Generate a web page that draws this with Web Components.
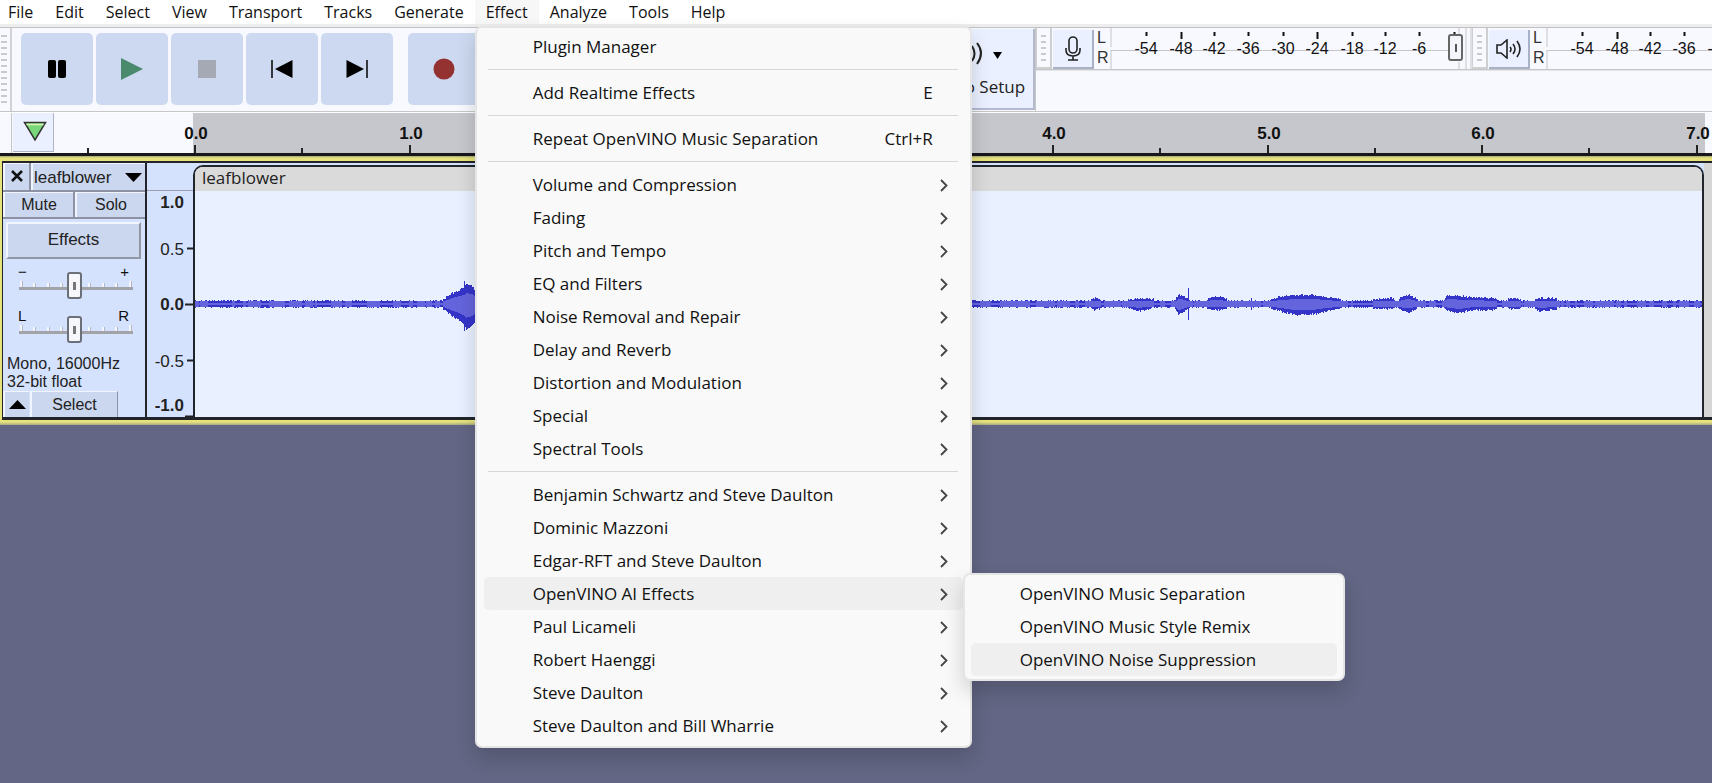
<!DOCTYPE html>
<html lang="en">
<head>
<meta charset="utf-8">
<title>Audio editor</title>
<style>
  :root {
    --ui: "Open Sans", "Noto Sans", sans-serif;
    --arial: "Liberation Sans", Arial, sans-serif;
    --face: #cdd9f0;
    --panel: #d5e2fe;
    --bar: #f8f9ff;
    --line: #c6c6c6;
    --ink: #111;
  }
  html, body { margin: 0; min-height: 100vh; background: #636684; overflow: hidden; }
</style>
</head>
<body>
<audio-app></audio-app>

<script>
const define = (name, html, ready) => {
  const tpl = document.createElement('template');
  tpl.innerHTML = html;
  customElements.define(name, class extends HTMLElement {
    constructor() {
      super();
      this.attachShadow({ mode: 'open' }).append(tpl.content.cloneNode(true));
    }
    connectedCallback() { if (ready) ready(this, this.shadowRoot); }
  });
};

/* ---- menus ---- */
define('menu-title', `
<style>
  :host { display: block; position: relative; flex: none; }
  button { font: 16px/24px var(--ui); height: 24px; padding: 0 11px; border: 0; background: none; color: var(--ink); display: block; white-space: nowrap; }
  :host([open]) button { background: #f7f7f7; }
  ::slotted(menu-popup) { position: absolute; left: 0; top: 26px; z-index: 10; }
</style>
<button type="button"></button><slot></slot>`, (el, root) => {
  root.querySelector('button').textContent = el.getAttribute('label');
});

define('menu-popup', `
<style>
  :host { display: block; box-sizing: border-box; width: 497px; padding: 2px 7px 4px; border: 2px solid #e5e5e5; border-radius: 7px; background: #f9f9f9; box-shadow: 0 10px 20px rgba(0,0,0,.16); }
  :host([sub]) { width: 382px; padding: 2px 6px 3px; }
</style>
<slot></slot>`);

define('menu-line', `
<style>
  :host { display: flex; align-items: center; height: 13px; margin: 0 5px 0 4px; }
  hr { flex: 1; margin: 0; border: 0; border-top: 1px solid #d7d7d7; }
</style>
<hr>`);

define('menu-item', `
<style>
  :host { display: block; position: relative; }
  button { display: flex; align-items: center; width: 100%; height: 33px; padding: 0 15px 0 49px; border: 0; border-radius: 5px; background: none; font: 17px/24px var(--ui); color: var(--ink); text-align: left; white-space: nowrap; }
  :host([active]) button { background: #efefef; }
  .label { flex: 1; }
  .key { margin-right: 15px; }
  svg { display: none; width: 8px; height: 14px; }
  :host([more]) svg { display: block; }
  :host([more]) .key { display: none; }
  ::slotted(menu-popup) { position: absolute; left: 100%; top: -4px; z-index: 11; }
</style>
<button type="button"><span class="label"></span><span class="key"></span>
<svg viewBox="0 0 8 14" aria-hidden="true"><path d="M1 2 L6.500 7.500 L1 13" fill="none" stroke="#444" stroke-width="1.800"/></svg></button><slot></slot>`, (el, root) => {
  root.querySelector('.label').textContent = el.getAttribute('label');
  root.querySelector('.key').textContent = el.getAttribute('key') || '';
});

define('menu-bar', `
<style>
  :host { display: flex; height: 24px; padding-bottom: 3px; background: linear-gradient(#fff 24px, #ededed 24px); }
  .shift { margin-left: -3px; }
</style>
<menu-title class="shift" label="File"></menu-title>
<menu-title label="Edit"></menu-title>
<menu-title label="Select"></menu-title>
<menu-title label="View"></menu-title>
<menu-title label="Transport"></menu-title>
<menu-title label="Tracks"></menu-title>
<menu-title label="Generate"></menu-title>
<menu-title label="Effect" open>
  <menu-popup>
    <menu-item label="Plugin Manager"></menu-item>
    <menu-line></menu-line>
    <menu-item label="Add Realtime Effects" key="E"></menu-item>
    <menu-line></menu-line>
    <menu-item label="Repeat OpenVINO Music Separation" key="Ctrl+R"></menu-item>
    <menu-line></menu-line>
    <menu-item more label="Volume and Compression"></menu-item>
    <menu-item more label="Fading"></menu-item>
    <menu-item more label="Pitch and Tempo"></menu-item>
    <menu-item more label="EQ and Filters"></menu-item>
    <menu-item more label="Noise Removal and Repair"></menu-item>
    <menu-item more label="Delay and Reverb"></menu-item>
    <menu-item more label="Distortion and Modulation"></menu-item>
    <menu-item more label="Special"></menu-item>
    <menu-item more label="Spectral Tools"></menu-item>
    <menu-line></menu-line>
    <menu-item more label="Benjamin Schwartz and Steve Daulton"></menu-item>
    <menu-item more label="Dominic Mazzoni"></menu-item>
    <menu-item more label="Edgar-RFT and Steve Daulton"></menu-item>
    <menu-item more active label="OpenVINO AI Effects">
      <menu-popup sub>
        <menu-item label="OpenVINO Music Separation"></menu-item>
        <menu-item label="OpenVINO Music Style Remix"></menu-item>
        <menu-item active label="OpenVINO Noise Suppression"></menu-item>
      </menu-popup>
    </menu-item>
    <menu-item more label="Paul Licameli"></menu-item>
    <menu-item more label="Robert Haenggi"></menu-item>
    <menu-item more label="Steve Daulton"></menu-item>
    <menu-item more label="Steve Daulton and Bill Wharrie"></menu-item>
  </menu-popup>
</menu-title>
<menu-title label="Analyze"></menu-title>
<menu-title label="Tools"></menu-title>
<menu-title label="Help"></menu-title>`);

/* ---- toolbars ---- */
define('tool-grip', `
<style>
  :host { display: block; box-sizing: border-box; flex: none; width: 12px; padding: 7px 3px 6px 1px; border-right: 2px solid #d2d2d4; }
  :host([small]) { width: 16px; padding: 7px 4px 6px; border: solid #cfcfd2; border-width: 0 2px 2px 1px; }
  div { height: 100%; background: repeating-linear-gradient(#c9cacd 0 2px, transparent 2px 6px); }
</style>
<div></div>`);

define('transport-button', `
<style>
  :host { display: block; flex: none; }
  button { display: grid; place-items: center; width: 72px; height: 72px; padding: 0; border: 0; border-radius: 5px; background: var(--face); }
</style>
<button type="button"><slot></slot></button>`, (el, root) => {
  root.querySelector('button').setAttribute('aria-label', el.getAttribute('label'));
});

define('level-meter', `
<style>
  :host { display: flex; flex: none; width: 436px; height: 41px; border-bottom: 1px solid var(--line); box-shadow: 0 1px #e4e5e8; }
  button { flex: none; box-sizing: border-box; display: grid; place-items: center; width: 41px; height: 39px; margin: 2px 0 0 1px; padding: 0; border: solid #a9b1c6; border-width: 0 2px 2px 0; background: #eaf0ff; }
  .lr { display: flex; flex-direction: column; width: 16px; padding-left: 3px; box-sizing: border-box; font: 16px/20px var(--arial); color: #333; }
  .scale { display: grid; width: 353px; }
  .scale > * { grid-area: 1 / 1; }
  svg.s { width: 361px; height: 41px; overflow: visible; font: 16px var(--arial); }
  input { appearance: none; width: 353px; height: 27px; margin: 6px 0 0; background: none; }
  input::-webkit-slider-thumb { appearance: none; box-sizing: border-box; width: 15px; height: 27px; border: 2px solid #666; border-radius: 3px; background: linear-gradient(#555,#555) center / 2px 8px no-repeat, #f4f5fb; }
</style>
<tool-grip small></tool-grip>
<button type="button"><slot></slot></button>
<div class="lr"><span>L</span><span>R</span></div>
<div class="scale"><svg class="s"></svg></div>`, (el, root) => {
  const label = el.getAttribute('label');
  root.querySelector('button').setAttribute('aria-label', label);
  const xs = [36, 71, 104, 138, 173, 207, 242, 275, 309, 344];
  const room = innerWidth - root.querySelector('.scale').getBoundingClientRect().left;
  let s = '<path d="M1 0V19M1 22V41M1 22.500H349M349 0V6M349 34V41M356 0V41M361 0V41" fill="none" stroke="#c6c6c8" stroke-width="1"/>';
  xs.forEach((x, i) => {
    if (x - 12 > room) return;
    s += `<path d="M${x}.500 4v${i % 4 === 1 ? 7 : 4}" stroke="#111" stroke-width="2"/><text x="${x}" y="26" text-anchor="middle" fill="#111">${i * 6 - 54}</text>`;
  });
  root.querySelector('svg.s').innerHTML = s;
  const input = document.createElement('input');
  Object.assign(input, { type: 'range', value: 100 });
  input.setAttribute('aria-label', label + ' volume');
  root.querySelector('.scale').append(input);
});

define('tool-dock', `
<style>
  :host { display: flex; height: 83px; background: var(--bar); border-top: 1px solid #c2c2c4; border-bottom: 1px solid var(--line); overflow: hidden; }
  .left { display: flex; box-sizing: border-box; flex: 0 0 1024px; border-right: 1px solid var(--line); }
  .transport { display: flex; flex: 1; gap: 3px; padding: 5px 0 0 9px; }
  .rec { margin-left: 12px; }
  .setup { box-sizing: border-box; width: 116px; height: 81px; margin-top: 1px; padding: 4px 6px 0 8px; border: solid #b3bace; border-width: 0 2px 2px 0; background: #eaf0ff; font: 17px/24px var(--ui); color: #222; display: flex; flex-direction: column; justify-content: flex-start; align-items: center; white-space: nowrap; }
  .setup svg { margin-right: 16px; }
  .meters { display: flex; flex: 1; min-width: 0; }
</style>
<tool-grip></tool-grip>
<div class="left">
  <div class="transport">
    <transport-button label="Pause"><svg width="20" height="20"><rect x="1" y="1" width="8" height="18" rx="2"/><rect x="11" y="1" width="8" height="18" rx="2"/></svg></transport-button>
    <transport-button label="Play"><svg width="22" height="22"><path d="M0 0L22 11L0 22Z" fill="#4a8a6c"/></svg></transport-button>
    <transport-button label="Stop"><svg width="18" height="18"><path d="M0 0H18V18H0Z" fill="#a5a9b3"/></svg></transport-button>
    <transport-button label="Skip to Start"><svg width="22" height="20"><path d="M1 1V19" stroke="#000" stroke-width="1.500"/><path d="M21.500 1V19L4 10Z"/></svg></transport-button>
    <transport-button label="Skip to End"><svg width="22" height="20"><path d="M21 1V19" stroke="#000" stroke-width="1.500"/><path d="M.5 1V19L18 10Z"/></svg></transport-button>
    <transport-button class="rec" label="Record"><svg width="22" height="22"><circle cx="11" cy="11" r="10.500" fill="#943232"/></svg></transport-button>
  </div>
  <button class="setup" type="button">
    <svg width="84" height="42" viewBox="0 2 84 42"><g fill="none" stroke="#222" stroke-width="2"><path d="M22 17h7l8-7v26l-8-7h-7z"/><path d="M41 18q3 5 0 9M45 15q5 8 0 15M50 12q8 10 0 21"/></g><path d="M66 21h9l-4.500 7z"/></svg>
    <span>Audio Setup</span>
  </button>
</div>
<div class="meters">
  <level-meter label="Record level"><svg width="16" height="25" viewBox="0 0 16 25" fill="none" stroke="#222" stroke-width="1.600"><rect x="4" y="1" width="8" height="16" rx="4"/><path d="M1 12v2q0 6 7 6t7-6v-2M8 20v4M3 24h10"/></svg></level-meter>
  <level-meter label="Playback level"><svg width="26" height="20" viewBox="0 0 26 20" fill="none" stroke="#222" stroke-width="1.600"><path d="M1 6h4l6-5v18l-6-5H1z"/><path d="M14 8q2 2 0 5M17 5q4 5 0 10M21 2q6 8 0 16"/></svg></level-meter>
</div>`);

/* ---- timeline ---- */
define('time-ruler', `
<style>
  :host { display: flex; height: 40px; background: var(--bar); border-top: 1px solid #fff; border-bottom: 3px solid #18181c; padding-left: 11px; overflow: hidden; }
  .edge { width: 1px; background: var(--line); }
  button { box-sizing: border-box; width: 41px; height: 39px; margin-left: 1px; padding: 0 0 0 3px; border: solid #aeb5c8; border-width: 0 1px 1px 0; background: #eaf0ff; }
  svg.r { flex: 1; height: 40px; font: bold 17px var(--arial); }
</style>
<span class="edge"></span>
<button type="button" aria-label="Timeline options"><svg width="24" height="20" viewBox="0 0 24 20"><path d="M1.500 1.500H22.500L12 19Z" fill="#7ad67a" stroke="#333" stroke-width="1.500"/><path d="M3.500 3.500H20.500" stroke="#d8f5b0" stroke-width="1.500"/></svg></button>
<svg class="r"></svg>`, (el, root) => {
  const labels = { 0: '0.0', 2: '1.0', 8: '4.0', 10: '5.0', 12: '6.0', 14: '7.0' };
  let s = '<rect x="139" width="1512" height="40" fill="#c6c7cc"/>';
  for (let i = -1; i < 15; i++) {
    const x = Math.round(141 + i * 107.25);
    s += `<rect x="${x - 1}" y="${i % 2 ? 35 : 32}" width="2" height="8" fill="#222"/>`;
    if (labels[i]) s += `<text x="${x + 1}" y="26" text-anchor="middle" fill="#111">${labels[i]}</text>`;
  }
  root.querySelector('.r').innerHTML = s;
});

/* ---- track ---- */
define('mini-slider', `
<style>
  :host { display: block; width: 115px; height: 44px; margin-left: 15px; }
  .ends { display: flex; justify-content: space-between; margin: 0 4px 0 0; height: 12px; font: 15px/12px var(--arial); color: #111; }
  .rail { display: grid; margin-top: -5px; }
  .rail > * { grid-area: 1 / 1; }
  svg { width: 115px; height: 26px; }
  input { appearance: none; width: 112px; height: 26px; margin: 0; background: none; }
  input::-webkit-slider-thumb { appearance: none; box-sizing: border-box; width: 15px; height: 27px; border: 2px solid #6b6f78; border-radius: 3px; background: linear-gradient(#777,#777) center / 3px 8px no-repeat, #f6f7fb; }
</style>
<div class="ends"><span class="a"></span><span class="b"></span></div>
<div class="rail"><svg><path d="M3 8v7M16 10v5M30 10v5M43 10v5M71 10v5M85 10v5M98 10v5M112 8v7" stroke="#f4f6fb" stroke-width="2"/><path d="M4.500 8v7M17.500 10v5M31.500 10v5M44.500 10v5M72.500 10v5M86.500 10v5M99.500 10v5M113.500 8v7" stroke="#b4b8c4" stroke-width="1"/><path d="M1 15.500H115" stroke="#a2a3a8" stroke-width="3"/></svg><input type="range" value="50"></div>`, (el, root) => {
  root.querySelector('.a').textContent = el.getAttribute('from');
  root.querySelector('.b').textContent = el.getAttribute('to');
  root.querySelector('input').setAttribute('aria-label', el.getAttribute('label'));
});

define('track-panel', `
<style>
  :host { display: flex; flex-direction: column; flex: none; width: 142px; background: var(--panel); border-right: 2px solid #22242a; font: 16px/18px var(--arial); color: #222; }
  .row { display: flex; gap: 2px; background: #8d93a4; border-bottom: 2px solid #8d93a4; }
  button { font: inherit; color: inherit; box-sizing: border-box; height: 25px; padding: 0; border: solid #f1f5ff; border-width: 1px 0 0 2px; background: #cbd7ee; }
  .top button { height: 27px; padding-top: 1px; }
  .close { width: 26px; }
  .name { flex: 1; display: flex; justify-content: space-between; align-items: center; padding: 1px 3px 0 1px; font-size: 17px; }
  .half { flex: 1; }
  .fx { height: 38px; margin: 3px 4px 0 3px; border: 2px solid; border-color: #f1f5ff #9297a5 #9297a5 #f1f5ff; font-size: 17px; }
  .vol { margin-top: 7px; }
  .pan { margin-top: 2px; }
  .info { margin-top: 3px; padding-left: 4px; }
  .foot { display: flex; gap: 1px; }
  .foot button { height: 26px; }
  .up { width: 26px; }
  .sel { width: 88px; border-right: 1px solid #8d93a4; }
</style>
<div class="row top"><button class="close" type="button" aria-label="Close track"><svg width="14" height="14"><path d="M2 2L12 12M12 2L2 12" stroke="#111" stroke-width="2.500"/></svg></button><button class="name" type="button">leafblower <svg width="17" height="10"><path d="M0 0H17L8.500 9Z"/></svg></button></div>
<div class="row"><button class="half" type="button">Mute</button><button class="half" type="button">Solo</button></div>
<button class="fx" type="button">Effects</button>
<mini-slider class="vol" from="−" to="+" label="Gain"></mini-slider>
<mini-slider class="pan" from="L" to="R" label="Pan"></mini-slider>
<div class="info">Mono, 16000Hz<br>32-bit float</div>
<div class="foot"><button class="up" type="button" aria-label="Collapse"><svg width="17" height="10"><path d="M0 9H17L8.500 0Z"/></svg></button><button class="sel" type="button">Select</button></div>`);

define('amp-ruler', `
<style>
  :host { display: block; flex: none; width: 46px; background: var(--panel); }
  svg { display: block; width: 46px; height: 254px; font: 17px var(--arial); }
</style>
<svg></svg>`, (el, root) => {
  let s = '<path d="M0 27.500H46" stroke="#9aa0b0" stroke-width="1"/>';
  [['1.0', 45, 0], ['0.5', 92, 85], ['0.0', 147, 141], ['-0.5', 204, 197], ['-1.0', 248, 253]].forEach(([t, y, k], i) => {
    s += `<text x="37" y="${y}" text-anchor="end" fill="#222"${i % 2 ? '' : ' font-weight="bold"'}>${t}</text>`;
    if (k) s += `<path d="M${i % 2 ? 40 : 38} ${k}.500H46" stroke="#222" stroke-width="2"/>`;
  });
  root.querySelector('svg').innerHTML = s;
});

define('wave-clip', `
<style>
  :host { display: block; flex: 1; min-width: 0; max-width: 1511px; box-sizing: border-box; background: var(--panel); padding-top: 2px; }
  .clip { box-sizing: border-box; height: 252px; border: 2px solid #22262c; border-bottom: 0; border-radius: 10px 10px 0 0; background: #e9f0ff; overflow: hidden; }
  .head { height: 24px; padding-left: 7px; background: #dadada; font: 17px/22px var(--ui); color: #222; }
  svg { display: block; width: 100%; height: 226px; }
</style>
<div class="clip"><div class="head">leafblower</div><svg></svg></div>`, (el, root) => {
  /* envelope points: pixel column, peak above the axis, peak below it */
  const env = [[0,4,4],[246,4,4],[250,6,7],[257,11,12],[266,15,18],[269,17,22],[271,20,25],[277,18,22],[281,12,16],[310,9,10],[340,4,4],
    [893,4,4],[899,6,6],[903,6,5],[908,4,4],[925,4,4],[933,5,5],[944,6,7],[958,5,4],[975,4,4],[980,5,5],[983,9,11],[988,8,9],[994,4,4],[1010,4,4],
    [1016,7,6],[1026,7,6],[1034,4,4],[1052,4,4],[1056,5,5],[1061,4,4],[1072,4,4],[1084,7,7],[1100,9,11],[1120,9,10],[1132,7,7],[1145,5,5],[1170,4,4],
    [1178,5,5],[1196,6,5],[1202,4,4],[1208,8,7],[1214,9,8],[1222,5,4],[1227,4,4],[1248,4,4],[1252,9,7],[1264,8,9],[1276,7,6],[1296,6,6],[1306,4,4],[1320,6,5],
    [1330,4,4],[1338,4,4],[1344,6,7],[1356,6,6],[1366,4,4],[1378,4,4],[1386,3,3],[1508,3,3]];
  let seed = 7;
  const rnd = () => (seed = (seed * 16807) % 2147483647) / 2147483647;
  let dark = '', light = '', k = 0, blob = 2;
  const mid = 113;
  for (let x = 0; x < 1508; x++) {
    while (x >= env[k + 1][0] && k < env.length - 2) k++;
    const [x0, u0, d0] = env[k], [x1, u1, d1] = env[k + 1], t = (x - x0) / (x1 - x0);
    let u = u0 + (u1 - u0) * t, d = d0 + (d1 - d0) * t;
    if (rnd() < .28) blob = rnd() < .4 ? 1 : 3;
    const base = Math.max(u, d) < 5;
    const iu = base ? blob : Math.max(3, u * .55), id = base ? blob : Math.max(3, d * .55);
    u = Math.round(base ? 3 + (rnd() < .3 ? 1 : 0) : u + rnd() * 2 - 1);
    d = Math.round(base ? 3 + (rnd() < .3 ? 1 : 0) : d + rnd() * 2 - 1);
    if (x === 993) { u = 16; d = 16; }
    if (x === 269) { u = 23; d = 27; }
    dark += `M${x}.500 ${mid - u}V${mid + d}`;
    light += `M${x}.500 ${mid - Math.round(iu)}V${mid + Math.round(id)}`;
  }
  root.querySelector('svg').innerHTML = `<path d="${dark}" stroke="#3434c8"/><path d="${light}" stroke="#6464dc"/>`;
});

define('audio-track', `
<style>
  :host { display: flex; height: 254px; background: #d6d6d6; border: solid #22242a; border-width: 2px 0 3px 1px; }
</style>
<track-panel></track-panel><amp-ruler></amp-ruler><wave-clip></wave-clip>`);

define('audio-app', `
<style>
  :host { display: block; }
  menu-bar { position: relative; z-index: 5; }
  .focus { padding: 5px 0 5px 2px; background: linear-gradient(#a3a37c, #e6e27c 2px, #e6e27c calc(100% - 3px), #a9a884); }
</style>
<menu-bar></menu-bar>
<tool-dock></tool-dock>
<time-ruler></time-ruler>
<div class="focus"><audio-track></audio-track></div>`);
</script>
</body>
</html>
